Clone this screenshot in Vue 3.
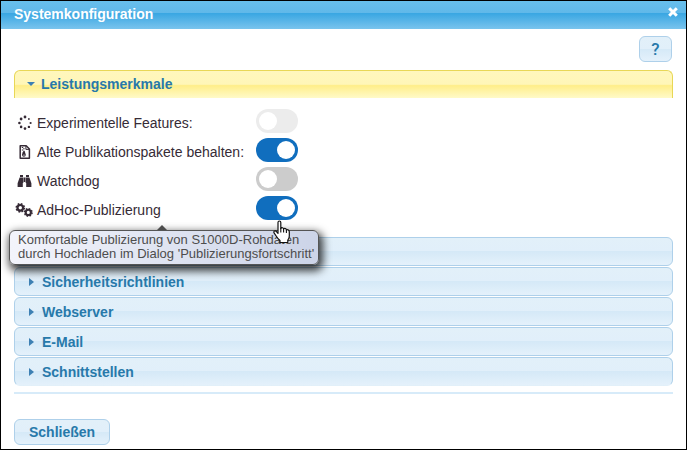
<script setup>
import { reactive } from 'vue'

const features = reactive([
  { id: 'experimental', icon: 'spinner', label: 'Experimentelle Features:', on: false, disabled: true },
  { id: 'keep-packages', icon: 'archive', label: 'Alte Publikationspakete behalten:', on: true, disabled: false },
  { id: 'watchdog', icon: 'binoculars', label: 'Watchdog', on: false, disabled: false },
  { id: 'adhoc', icon: 'gears', label: 'AdHoc-Publizierung', on: true, disabled: false, tip: true }
])

const sections = ['', 'Sicherheitsrichtlinien', 'Webserver', 'E-Mail', 'Schnittstellen']

const dots = [
  [8, 2, 1.4], [11.9, 4, 0.9], [13.6, 8, 1.1], [11.9, 11.9, 1.2],
  [8, 13.6, 1.3], [4.1, 11.9, 1.3], [2.4, 8, 1.3], [4.1, 4, 1.4]
]
</script>

<template>
  <main class="dialog">
    <header class="titlebar">
      <h1>Systemkonfiguration</h1>
      <button class="close" type="button" aria-label="Dialog schließen">
        <svg width="12" height="12" viewBox="0 0 12 12"><path d="M2.2 2.2 9.8 9.8M9.8 2.2 2.2 9.8" stroke="#fff" stroke-width="3" /></svg>
      </button>
    </header>

    <div class="content">
      <div class="toolbar">
        <button class="btn help" type="button">?</button>
      </div>

      <button class="section open" type="button" aria-expanded="true">
        <svg class="caret" width="8" height="8" viewBox="0 0 8 8"><path d="M0 2H8L4 6Z" /></svg>
        <span>Leistungsmerkmale</span>
      </button>

      <div class="panel">
        <div v-for="f in features" :key="f.id" class="row">
          <label :for="f.id">
            <svg v-if="f.icon === 'spinner'" class="icon" viewBox="0 0 16 16">
              <circle v-for="(d, i) in dots" :key="i" :cx="d[0]" :cy="d[1]" :r="d[2]" />
            </svg>
            <svg v-else-if="f.icon === 'archive'" class="icon" viewBox="0 0 16 16">
              <path d="M3.2 1.8H9.2L12.4 5V14.2H3.2Z" fill="none" stroke="currentColor" stroke-width="1.5" stroke-linejoin="round" />
              <path d="M8.9 2V5.4H12.2" fill="none" stroke="currentColor" />
              <path d="M4.8 3H6.2V4H4.8ZM6.2 4.2H7.6V5.2H6.2ZM4.8 5.5H6.2V6.5H4.8ZM6.2 6.8H7.6L8.8 10.8Q8.9 12.8 6.9 12.8T5 10.8L5.7 8H6.2Z" />
              <path d="M6.2 10.7H7.7V11.5H6.2Z" fill="#fff" />
            </svg>
            <svg v-else-if="f.icon === 'binoculars'" class="icon" viewBox="0 0 16 16">
              <path d="M3 2H6V4H3ZM9 2H12V4H9ZM2.6 4.5H6.3V10H5.8V14H.6V10.2ZM8.7 4.5H12.4L14.4 10.2V14H9.2V10H8.7ZM6.7 4.5H8.3V9H6.7Z" />
            </svg>
            <svg v-else class="icon gears" viewBox="0 0 18 16">
              <g fill="none" stroke="currentColor">
                <circle cx="5.3" cy="5.8" r="2.8" stroke-width="2.2" />
                <circle cx="5.3" cy="5.8" r="4" stroke-width="1.7" stroke-dasharray="1.7 1.44" />
                <circle cx="13.3" cy="10.4" r="2.6" stroke-width="2.1" />
                <circle cx="13.3" cy="10.4" r="3.7" stroke-width="1.6" stroke-dasharray="1.5 1.4" />
              </g>
            </svg>
            <span>{{ f.label }}</span>
          </label>
          <input :id="f.id" v-model="f.on" class="switch" type="checkbox" role="switch" :disabled="f.disabled" />
          <div v-if="f.tip" class="tooltip" role="tooltip">
            Komfortable Publizierung von S1000D-Rohdaten<br />durch Hochladen im Dialog 'Publizierungsfortschritt'
          </div>
          <svg v-if="f.tip" class="pointer" width="18" height="24" viewBox="0 0 18 24">
            <path d="M5 2.5Q5 1 6.4 1T7.8 2.5V8.5Q8.4 7.4 9.5 7.8T10.6 9Q11.4 8 12.4 8.5T13.4 10Q14.3 9.2 15.3 9.9T16.3 11.8V16Q16.3 18.3 14.8 20.2V22.5H7V20.5Q4.5 18.4 2.8 15.5L.9 12.6Q.6 11.2 1.8 11T3.9 12.1L5 13.4Z" fill="#fff" stroke="#111" stroke-width="1.2" stroke-linejoin="round" />
            <path d="M7.8 8V12.5M10.6 9V12.5M13.4 10V13" fill="none" stroke="#111" stroke-width="1.1" />
          </svg>
        </div>
      </div>

      <div class="sections">
        <button v-for="(s, i) in sections" :key="i" class="section" type="button" aria-expanded="false">
          <svg class="caret" width="8" height="8" viewBox="0 0 8 8"><path d="M1 0V8L6 4Z" /></svg>
          <span>{{ s }}</span>
        </button>
      </div>

      <footer>
        <button class="btn" type="button">Schließen</button>
      </footer>
    </div>
  </main>
</template>

<style>
body {
  margin: 0;
  background: #fff;
}
</style>

<style scoped>
.dialog,
.dialog * {
  box-sizing: border-box;
}
.dialog {
  min-height: 100vh;
  border: 1px solid #000;
  background: #fff;
  color: #362b36;
  font-family: "Liberation Sans", Arial, sans-serif;
  font-size: 14px;
}
button {
  margin: 0;
  font: bold 14px "Liberation Sans", Arial, sans-serif;
  cursor: pointer;
}
.titlebar {
  display: flex;
  align-items: center;
  justify-content: space-between;
  height: 28px;
  padding: 0 7px 2px 13px;
  background: linear-gradient(#68bfec 0, #60b8e9 42%, #38a6e2 43%, #7ac4ed 100%);
}
h1 {
  margin: 0;
  color: #fff;
  font-size: 14px;
  line-height: 16px;
}
.close {
  display: flex;
  padding: 0 0 4px;
  border: 0;
  background: none;
}
.content {
  padding: 7px 13px 4px;
}
.toolbar {
  display: flex;
  justify-content: flex-end;
  padding: 0 1px 8px 0;
}
.btn {
  height: 26px;
  padding: 0 14px;
  border: 1px solid #aed0ea;
  border-radius: 6px;
  background: linear-gradient(#e2f0f9 0, #e1effa 49%, #d5e9f7 50%, #e4f1fb 100%);
  color: #2779aa;
  line-height: 24px;
}
.help {
  width: 33px;
  padding: 0;
  font-family: Roboto, "Liberation Sans", sans-serif;
  font-size: 17px;
  font-weight: 500;
}
.section {
  display: flex;
  align-items: center;
  gap: 6px;
  width: 100%;
  height: 29px;
  padding: 0 12px 0 13px;
  border: 1px solid #aed0ea;
  border-radius: 6px;
  background: linear-gradient(#e2f0f9 0, #e1effa 49%, #d5e9f7 50%, #e4f1fb 100%);
  color: #2779aa;
  line-height: 16px;
  text-align: left;
}
.section.open {
  height: 28px;
  padding: 0 12px 1px;
  border-color: #e8d756;
  border-bottom: 0;
  border-radius: 6px 6px 0 0;
  background: linear-gradient(#fff7bd 0, #fff6b8 49%, #ffee89 54%, #fffac8 100%);
}
.caret {
  flex: none;
  fill: #3d80b3;
}
.panel {
  display: grid;
  gap: 5px;
  padding: 11px 1px 17px;
}
.row {
  position: relative;
  display: grid;
  grid-template-columns: 241px auto;
  align-items: center;
  justify-content: start;
}
label {
  display: flex;
  align-items: center;
  gap: 4px;
  padding-top: 4px;
  line-height: 18px;
  white-space: nowrap;
}
.icon {
  flex: none;
  width: 16px;
  height: 16px;
  margin-left: 2px;
  fill: currentColor;
}
.icon.gears {
  width: 18px;
  margin-left: 0;
}
.switch {
  appearance: none;
  width: 42px;
  height: 24px;
  margin: 0;
  padding: 3px;
  border-radius: 12px;
  background: #ccc;
  cursor: pointer;
}
.switch::before {
  content: "";
  display: block;
  width: 18px;
  height: 18px;
  border-radius: 50%;
  background: #fff;
}
.switch:checked {
  background: #106ebe;
}
.switch:checked::before {
  margin-left: 18px;
}
.switch:disabled {
  background: #ececec;
}
.tooltip {
  position: absolute;
  z-index: 1;
  top: 34px;
  left: -6px;
  padding: 2px 4px 3px 8px;
  border: 1px solid #555;
  border-radius: 6px;
  background: linear-gradient(to right, #f3f4fb, #ccd4e8);
  box-shadow: 2px 4px 9px 2px rgba(0, 0, 0, 0.75);
  color: #4d4d4d;
  font-size: 13px;
  line-height: 14px;
  white-space: nowrap;
}
.tooltip::before {
  content: "";
  position: absolute;
  top: -6px;
  left: 147px;
  border: 5px solid transparent;
  border-top: 0;
  border-bottom-color: #4d4d4d;
}
.pointer {
  position: absolute;
  z-index: 2;
  top: 24px;
  left: 258px;
}
.sections {
  display: grid;
  gap: 1px;
  padding-bottom: 6px;
  border-bottom: 2px solid #d7ebf9;
}
.sections .section:last-child {
  border-bottom-color: transparent;
}
footer {
  padding-top: 25px;
}
</style>
